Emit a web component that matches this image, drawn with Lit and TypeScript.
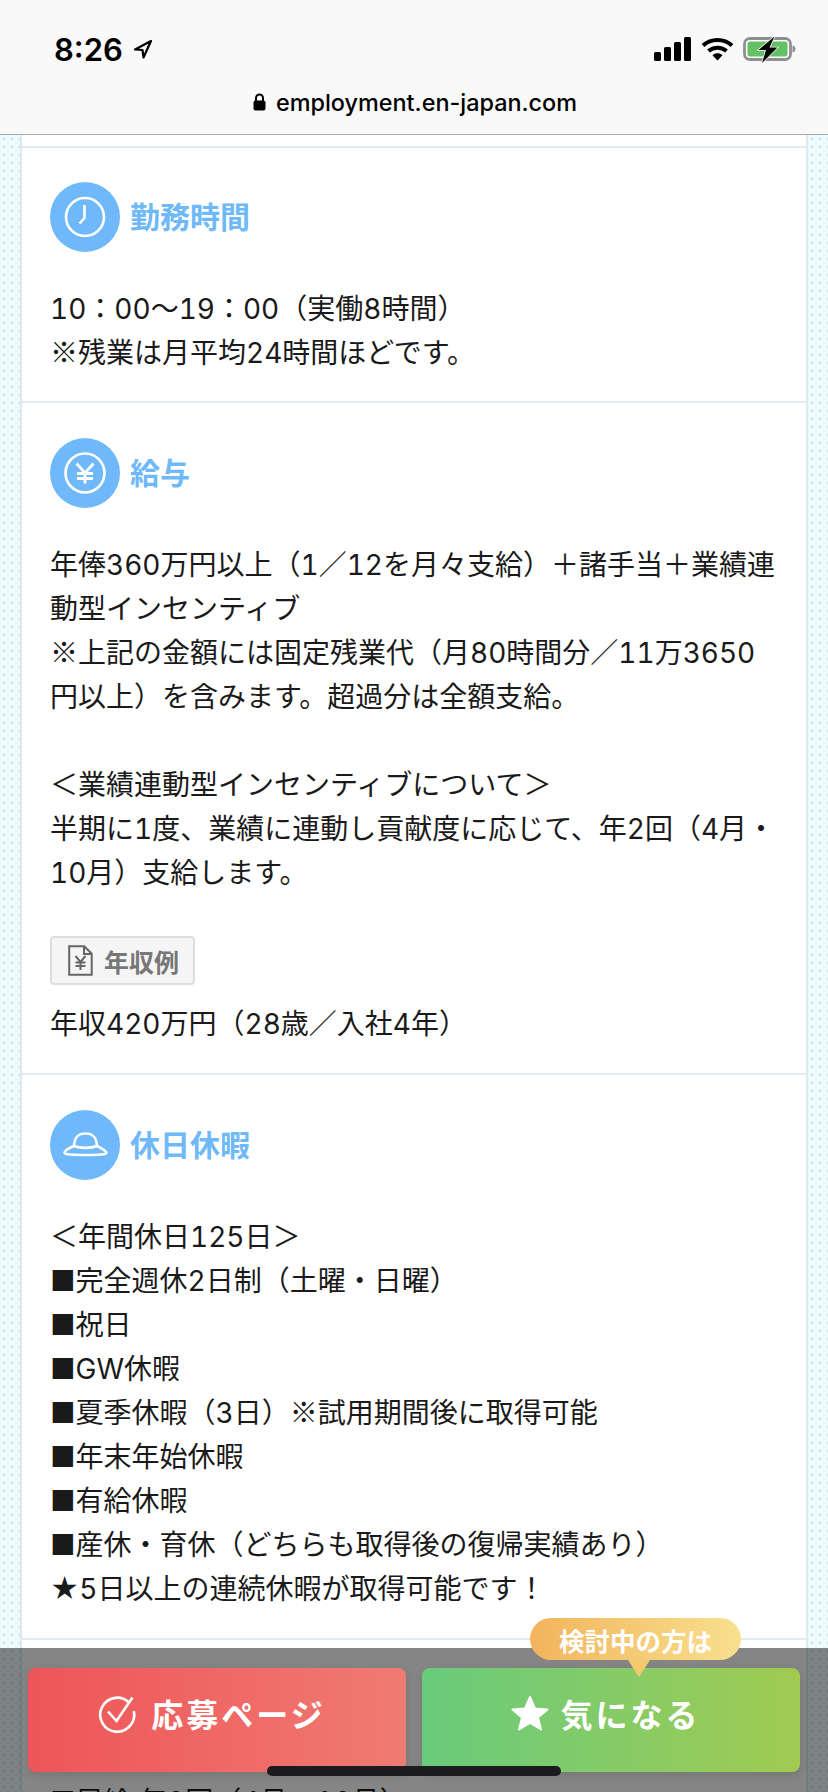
import { LitElement, html, css, svg } from 'lit';
import { customElement } from 'lit/decorators.js';

type Section = {
  title: string;
  icon: ReturnType<typeof svg>;
  body: string;
  badge?: string;
  after?: string;
};

const CLOCK = svg`
  <circle cx="35" cy="35" r="19" />
  <path d="M34.5 23v13l-5 5.5" />
`;

const YEN = svg`
  <circle cx="35" cy="35" r="19.5" />
  <path d="M26.5 25.5 35 35l8.5-9.5M35 35v10.5M27 35.5h16M27 40.5h16" stroke-width="2.8" />
`;

const HAT = svg`
  <path d="M24 36C24.5 27 28 23.5 35.5 23.5S46.5 27 47 36" />
  <path d="M24 36C30 38.5 41 38.5 47 36" />
  <path d="M24 36C19 38 14.5 41 14.5 43C14.5 44.5 22 45 35.5 45S56.5 44.5 56.5 43C56.5 41 51 38 47 36" />
`;

const SECTIONS: Section[] = [
  {
    title: '勤務時間',
    icon: CLOCK,
    body: '10：00〜19：00（実働8時間）\n※残業は月平均24時間ほどです。',
  },
  {
    title: '給与',
    icon: YEN,
    body: '年俸360万円以上（1／12を月々支給）＋諸手当＋業績連\n動型インセンティブ\n※上記の金額には固定残業代（月80時間分／11万3650\n円以上）を含みます。超過分は全額支給。\n\n＜業績連動型インセンティブについて＞\n半期に1度、業績に連動し貢献度に応じて、年2回（4月・\n10月）支給します。',
    badge: '年収例',
    after: '年収420万円（28歳／入社4年）',
  },
  {
    title: '休日休暇',
    icon: HAT,
    body: '＜年間休日125日＞\n■完全週休2日制（土曜・日曜）\n■祝日\n■GW休暇\n■夏季休暇（3日）※試用期間後に取得可能\n■年末年始休暇\n■有給休暇\n■産休・育休（どちらも取得後の復帰実績あり）\n★5日以上の連続休暇が取得可能です！',
  },
  {
    title: '福利厚生',
    icon: YEN,
    body: '■昇給 年2回（4月、10月）',
  },
];

@customElement('app-root')
export class AppRoot extends LitElement {
  // Inter carries its own narrow ※, the wide one comes from the CJK family
  private _text(text: string) {
    return text.split('※').map((part, i) =>
      i === 0 ? part : html`<span class="cjk">※</span>${part}`
    );
  }

  private _statusIcons() {
    return html`
      <svg class="signal" width="38" height="24" viewBox="0 0 38 24">
        <rect x="0" y="15" width="7" height="9" rx="1.5" />
        <rect x="10" y="10" width="7" height="14" rx="1.5" />
        <rect x="20" y="5" width="7" height="19" rx="1.5" />
        <rect x="30" y="0" width="7" height="24" rx="1.5" />
      </svg>
      <svg class="wifi" width="33" height="24" viewBox="0 0 33 24">
        <path d="M2 8.5C10 1 23 1 31 8.5" fill="none" stroke="#000" stroke-width="4" />
        <path d="M7.5 14C12.5 9.5 20.5 9.5 25.5 14" fill="none" stroke="#000" stroke-width="4" />
        <path d="M11.5 18.2C14.5 15.6 18.5 15.6 21.5 18.2L16.5 23.5Z" fill="#000" />
      </svg>
      <svg class="battery" width="53" height="30" viewBox="0 0 53 30">
        <rect x="1.5" y="4.5" width="46" height="21" rx="5.5" fill="#fff" stroke="#8f8f8f" stroke-width="2.8" />
        <rect x="4.5" y="7.5" width="40" height="15" rx="2.5" fill="#63c064" />
        <path d="M49.5 11.5c2.2.6 3 1.9 3 3.5s-.8 2.9-3 3.5Z" fill="#8f8f8f" />
        <path d="M31.5 2.5 15.5 16h7.5L19 29 34.5 13.5h-8Z" fill="#000" stroke="#f4faf2" stroke-width="1.6" paint-order="stroke" />
      </svg>
    `;
  }

  private _section(s: Section) {
    return html`
      <section class="section">
        <h2 class="heading">
          <svg class="heading-icon" width="70" height="70" viewBox="0 0 70 70">
            <circle class="disc" cx="35" cy="35" r="35" />
            <g class="glyph">${s.icon}</g>
          </svg>
          <span>${s.title}</span>
        </h2>
        <p class="body">${this._text(s.body)}</p>
        ${s.badge
          ? html`
              <div class="badge">
                <svg width="25" height="31" viewBox="0 0 25 31">
                  <path class="doc" d="M1.2 1.2h15l7.5 7.5v21H1.2ZM16 1.5v7.5h7.5" />
                  <path class="doc" d="M7.5 11l5 6 5-6M12.5 17v8M7.5 17.5h10M7.5 21h10" />
                </svg>
                <span>${s.badge}</span>
              </div>
              <p class="body">${s.after}</p>
            `
          : ''}
      </section>
    `;
  }

  override render() {
    return html`
      <header class="chrome">
        <div class="status">
          <div class="time">
            <span>8:26</span>
            <svg width="20" height="20" viewBox="0 0 20 20">
              <path d="M18 2 2 10.5 9.5 11 10.5 18.5Z" fill="none" stroke="#000" stroke-width="2.2" stroke-linejoin="round" />
            </svg>
          </div>
          <div class="status-right">${this._statusIcons()}</div>
        </div>
        <div class="url">
          <svg width="13" height="18" viewBox="0 0 13 18">
            <path d="M3 8V5a3.5 3.5 0 0 1 7 0v3" fill="none" stroke="#000" stroke-width="2" />
            <rect x="0.5" y="7.5" width="12" height="10" rx="2" fill="#000" />
          </svg>
          <span>employment.en-japan.com</span>
        </div>
      </header>

      <main class="page">
        <div class="card">
          <div class="stub"></div>
          ${SECTIONS.map((s) => this._section(s))}
        </div>
      </main>

      <footer class="actions">
        <a class="action action--apply">
          <svg width="38" height="40" viewBox="0 0 38 40" fill="none" stroke="#fff" stroke-width="2.6">
            <path d="M30.5 9A17 17 0 1 0 35.8 18" />
            <path d="M10 18.5 18.5 28 34.5 4.5" />
          </svg>
          <span>応募ページ</span>
        </a>
        <a class="action action--keep">
          <div class="tag">検討中の方は</div>
          <svg width="38" height="36" viewBox="0 0 38 36">
            <path d="M19 2 24 13.5 36.5 14.5 27 22.5 30 34.5 19 28 8 34.5 11 22.5 1.5 14.5 14 13.5Z" fill="#fff" stroke="#fff" stroke-width="2" stroke-linejoin="round" />
          </svg>
          <span>気になる</span>
        </a>
      </footer>
      <div class="home"></div>
    `;
  }

  static styles = css`
    :host {
      display: block;
      position: relative;
      height: 1792px;
      overflow: hidden;
      font-family: Inter, 'Noto Sans CJK JP', sans-serif;
      color: #111;
      background: #fff;
    }

    .chrome {
      height: 134px;
      background: #f9f9f9;
      border-bottom: 1px solid #a9acaf;
      display: flex;
      flex-direction: column;
    }

    .status {
      height: 58px;
      margin-top: 20px;
      padding: 0 32px 0 54px;
      display: flex;
      align-items: center;
      justify-content: space-between;
    }

    .time {
      display: flex;
      align-items: center;
      gap: 10px;
      font-size: 31px;
      font-weight: 600;
      color: #000;
    }

    .status-right {
      display: flex;
      align-items: center;
      gap: 9px;
    }

    .url {
      height: 48px;
      padding-left: 2px;
      display: flex;
      align-items: center;
      justify-content: center;
      gap: 10px;
      font-size: 23.4px;
      font-weight: 500;
      color: #000;
    }

    .page {
      padding: 0 20px;
      background-color: #f4fbfd;
      background-image:
        radial-gradient(circle, #cbeef6 1.5px, transparent 1.9px),
        radial-gradient(circle, #e2f5fa 1.3px, transparent 1.7px);
      background-size: 8px 8px;
      background-position: 0 0, 4px 4px;
    }

    .card {
      background: #fff;
      border-left: 2px solid #dcebf0;
      border-right: 2px solid #dcebf0;
    }

    .stub {
      height: 11px;
      border-bottom: 2px solid #e0ecef;
    }

    .section {
      padding: 35px 26px 27px 28px;
      border-bottom: 2px solid #e0ecef;
    }

    .section:first-of-type {
      padding-top: 34px;
      padding-bottom: 26px;
    }

    .heading {
      margin: 0 0 35px;
      height: 70px;
      display: flex;
      align-items: center;
      gap: 10px;
      font-size: 30px;
      font-weight: 700;
      color: #6fb9f8;
    }

    .heading span {
      padding-bottom: 5px;
    }

    .heading-icon {
      flex: none;
    }

    .disc {
      fill: #6fb9fb;
    }

    .glyph {
      fill: none;
      stroke: #fff;
      stroke-width: 2.6;
    }

    .body {
      margin: 0;
      font-size: 28px;
      line-height: 44px;
      font-variant-numeric: tabular-nums;
      white-space: pre;
      color: #1a1a1a;
    }

    .cjk {
      font-family: 'Noto Sans CJK JP', sans-serif;
      line-height: 0;
    }

    .badge {
      box-sizing: border-box;
      width: 145px;
      height: 49px;
      margin: 41px 0 17px;
      padding-left: 16px;
      display: flex;
      align-items: center;
      gap: 11px;
      background: #f5f5f5;
      border: 2px solid #dedede;
      border-radius: 4px;
      font-size: 25px;
      font-weight: 700;
      color: #777;
    }

    .doc {
      fill: none;
      stroke: #666;
      stroke-width: 2;
    }

    .actions {
      position: absolute;
      left: 0;
      right: 0;
      bottom: 0;
      height: 144px;
      box-sizing: border-box;
      padding: 20px 28px 0;
      display: flex;
      align-items: flex-start;
      gap: 16px;
      background: rgba(0, 0, 0, 0.48);
    }

    .action {
      position: relative;
      flex: 1;
      height: 104px;
      box-sizing: border-box;
      padding: 0 10px 14px 0;
      display: flex;
      align-items: center;
      justify-content: center;
      border-radius: 8px;
      box-shadow: 0 3px 10px rgba(0, 0, 0, 0.12);
      font-size: 32px;
      font-weight: 700;
      letter-spacing: 3px;
      color: #fff;
    }

    .action--apply {
      gap: 15px;
      background: linear-gradient(90deg, #ee5557, #f07b73);
    }

    .action--keep {
      gap: 11px;
      background: linear-gradient(90deg, #69cb7c, #a1cb52);
    }

    .tag {
      position: absolute;
      left: 108px;
      top: -50px;
      width: 211px;
      height: 42px;
      display: flex;
      align-items: center;
      justify-content: center;
      border-radius: 21px;
      background: linear-gradient(90deg, #f2b45c, #f8e08e);
      font-size: 25.5px;
      letter-spacing: 0;
    }

    .tag::after {
      content: '';
      position: absolute;
      left: 98px;
      top: 42px;
      border-left: 11px solid transparent;
      border-right: 11px solid transparent;
      border-top: 17px solid #f5c96f;
    }

    .home {
      position: absolute;
      left: 267px;
      top: 1766px;
      width: 294px;
      height: 10px;
      border-radius: 5px;
      background: #1c1c1e;
    }
  `;
}

declare global {
  interface HTMLElementTagNameMap {
    'app-root': AppRoot;
  }
}
